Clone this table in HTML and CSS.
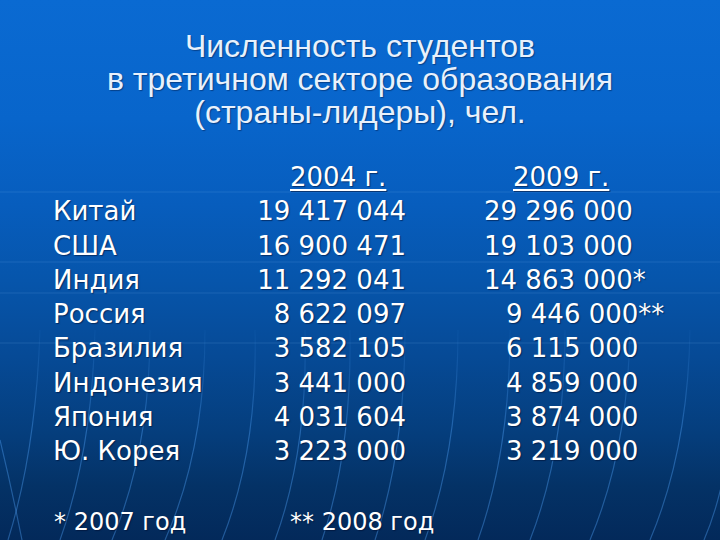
FILE: index.html
```html
<!DOCTYPE html>
<html lang="ru">
<head>
<meta charset="utf-8">
<title>Численность студентов</title>
<link rel="stylesheet" href="styles.css">
</head>
<body>
<div class="slide">
  <svg class="bg-lines" width="720" height="540" viewBox="0 0 720 540" aria-hidden="true">
    <defs>
      <linearGradient id="fade" x1="0" y1="0" x2="0" y2="1">
        <stop offset="0.58" stop-color="#ffffff" stop-opacity="0"/>
        <stop offset="0.8" stop-color="#ffffff" stop-opacity="1"/>
        <stop offset="1" stop-color="#ffffff" stop-opacity="1"/>
      </linearGradient>
      <mask id="m">
        <rect x="0" y="0" width="720" height="540" fill="url(#fade)"/>
      </mask>
    </defs>
    <g class="hlines">
      <line x1="0" y1="192" x2="720" y2="192"/>
      <line x1="0" y1="262" x2="720" y2="262"/>
      <line x1="0" y1="293" x2="720" y2="293"/>
      <line x1="0" y1="343" x2="720" y2="343"/>
    </g>
    <g class="curves" mask="url(#m)">
      <path d="M0,440 Q12,490 22,540"/>
      <path d="M40,330 Q36,450 8,540"/>
      <path d="M95,330 Q92,450 60,540"/>
      <path d="M150,330 Q150,450 112,540"/>
      <path d="M205,330 Q205,450 165,540"/>
      <path d="M255,330 Q258,450 222,540"/>
      <path d="M305,330 Q308,450 275,540"/>
      <path d="M350,330 Q352,450 322,540"/>
      <path d="M405,330 Q405,450 375,540"/>
      <path d="M458,330 Q458,450 425,540"/>
      <path d="M510,330 Q510,450 478,540"/>
      <path d="M565,330 Q565,450 530,540"/>
      <path d="M630,330 Q628,450 590,540"/>
      <path d="M690,330 Q688,450 650,540"/>
      <path d="M735,380 Q730,480 704,540"/>
    </g>
  </svg>

  <div class="content">
    <h1 class="title">Численность студентов<br>в третичном секторе образования<br>(страны-лидеры), чел.</h1>

    <div class="table">
      <div class="cell"></div>
      <div class="cell head head-a"><span class="u">2004 г.</span></div>
      <div class="cell head head-b"><span class="u">2009 г.</span></div>

      <div class="cell name">Китай</div>
      <div class="cell num">19 417 044</div>
      <div class="cell num2">29 296 000</div>

      <div class="cell name">США</div>
      <div class="cell num">16 900 471</div>
      <div class="cell num2">19 103 000</div>

      <div class="cell name">Индия</div>
      <div class="cell num">11 292 041</div>
      <div class="cell num2">14 863 000*</div>

      <div class="cell name">Россия</div>
      <div class="cell num">8 622 097</div>
      <div class="cell num2 shift">9 446 000**</div>

      <div class="cell name">Бразилия</div>
      <div class="cell num">3 582 105</div>
      <div class="cell num2 shift">6 115 000</div>

      <div class="cell name">Индонезия</div>
      <div class="cell num">3 441 000</div>
      <div class="cell num2 shift">4 859 000</div>

      <div class="cell name">Япония</div>
      <div class="cell num">4 031 604</div>
      <div class="cell num2 shift">3 874 000</div>

      <div class="cell name">Ю. Корея</div>
      <div class="cell num">3 223 000</div>
      <div class="cell num2 shift">3 219 000</div>
    </div>

    <div class="notes">
      <span class="note first">* 2007 год</span>
      <span class="note">** 2008 год</span>
    </div>
  </div>
</div>
</body>
</html>
```

FILE: styles.css
```css
html, body {
  margin: 0;
  padding: 0;
}

body {
  width: 720px;
  height: 540px;
  overflow: hidden;
  background: #04295a;
}

.slide {
  position: relative;
  width: 720px;
  height: 540px;
  overflow: hidden;
  background: linear-gradient(180deg,
    #0a6ad2 0%,
    #0865cb 22%,
    #075dbd 38%,
    #0655ab 52%,
    #064a96 66%,
    #053e7d 80%,
    #043266 90%,
    #03295a 100%);
}

.bg-lines {
  position: absolute;
  left: 0;
  top: 0;
  pointer-events: none;
}

.hlines line {
  stroke: rgba(150, 200, 255, 0.10);
  stroke-width: 1.5;
}

.curves path {
  fill: none;
  stroke: rgba(80, 160, 245, 0.40);
  stroke-width: 1.2;
}

.content {
  position: relative;
}

.title {
  margin: 0;
  padding-top: 30px;
  font-family: "Liberation Sans", Arial, sans-serif;
  font-weight: normal;
  font-size: 32px;
  line-height: 33px;
  text-align: center;
  color: #e8f1fc;
  text-shadow: 1px 1px 1px rgba(0, 20, 60, 0.45);
}

.table {
  display: grid;
  grid-template-columns: 202px 151px 1fr;
  margin-top: 31px;
  padding-left: 53px;
  font-family: "DejaVu Sans", Verdana, sans-serif;
  font-size: 26px;
  line-height: 34.3px;
  color: #ffffff;
  text-shadow: 1px 1px 1px rgba(0, 15, 50, 0.55);
}

.cell {
  white-space: nowrap;
}

.head-a {
  padding-left: 35px;
}

.head-b {
  padding-left: 107px;
}

.u {
  text-decoration: underline;
  text-decoration-thickness: 1.5px;
  text-underline-offset: 3px;
}

.num {
  text-align: right;
}

.num2 {
  padding-left: 78px;
}

.num2.shift {
  padding-left: 100px;
}

.notes {
  display: flex;
  margin-top: 36px;
  padding-left: 54px;
  font-family: "DejaVu Sans", Verdana, sans-serif;
  font-size: 24px;
  line-height: 34px;
  color: #ffffff;
  text-shadow: 1px 1px 1px rgba(0, 15, 50, 0.55);
}

.note.first {
  width: 236px;
}
```
